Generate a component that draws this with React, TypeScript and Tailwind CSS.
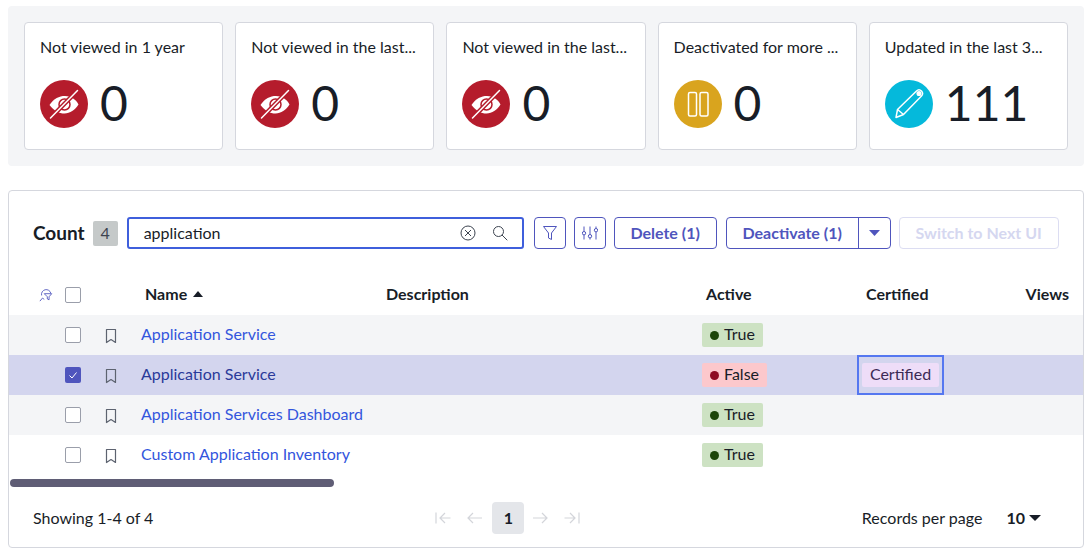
import { ReactNode } from "react";

// ---- icons ----

function EyeOff() {
  return (
    <svg viewBox="0 0 48 48" className="h-12 w-12">
      <path d="M9.500 25C14 18.500 19 16 25 16s10.500 3 13.500 8.500C35 30 30 33.500 24.500 33.500S14 31 9.500 25Z" fill="#fff" />
      <circle cx="24.500" cy="24.500" r="5.500" fill="none" stroke="#b51c2c" strokeWidth="1.500" />
      <path d="M10.500 38 37.500 10.500" stroke="#b51c2c" strokeWidth="4.500" />
      <path d="M10.500 38 37.500 10.500" stroke="#fff" strokeWidth="1.500" strokeLinecap="round" />
    </svg>
  );
}

function Pause() {
  return (
    <svg viewBox="0 0 48 48" className="h-12 w-12" fill="none" stroke="#fff" strokeWidth="1.500">
      <rect x="14.500" y="12.500" width="8" height="23.500" rx="1.500" />
      <rect x="26" y="12.500" width="8" height="23.500" rx="1.500" />
    </svg>
  );
}

function Pencil() {
  return (
    <svg viewBox="0 0 48 48" className="h-12 w-12" fill="none" stroke="#fff" strokeWidth="1.500" strokeLinejoin="round">
      <path d="M11 37.500l1.500-8L31.500 11c1.500-1.500 3.500-1.500 5 0s1.500 3.500 0 5L18.500 34.500 11 37.500Z" />
      <path d="M12.500 29.500l6 5" />
      <circle cx="34" cy="13.500" r="1.800" fill="#fff" />
    </svg>
  );
}

function FilterIcon() {
  return (
    <svg viewBox="0 0 16 16" className="h-4 w-4" fill="none" stroke="#4f55bd" strokeWidth="1" strokeLinejoin="round">
      <path d="M1.500 1.500h13L9.500 8v6.500l-3-1.500V8L1.500 1.500Z" />
    </svg>
  );
}

function SlidersIcon() {
  return (
    <svg viewBox="0 0 16 16" className="h-4 w-4" fill="none" stroke="#4f55bd" strokeWidth="1">
      <path d="M2 1.500v5M2 10v4.500M8 1.500v8M8 13v1.500M14 1.500v2M14 7v7.500" />
      <circle cx="2" cy="8.200" r="1.700" />
      <circle cx="8" cy="11.200" r="1.700" />
      <circle cx="14" cy="5.200" r="1.700" />
    </svg>
  );
}

function ClearIcon() {
  return (
    <svg viewBox="0 0 16 16" className="h-4 w-4" fill="none" stroke="#3d4450" strokeWidth="1">
      <circle cx="8" cy="8" r="7" />
      <path d="M5 5l6 6M11 5l-6 6" />
    </svg>
  );
}

function SearchIcon() {
  return (
    <svg viewBox="0 0 16 16" className="h-4 w-4" fill="none" stroke="#3d4450" strokeWidth="1">
      <circle cx="6.500" cy="6.500" r="5" />
      <path d="M10.200 10.200l4.800 4.800" strokeLinecap="round" />
    </svg>
  );
}

function Bookmark() {
  return (
    <svg viewBox="0 0 14 16" className="h-4 w-[14px]" fill="none" stroke="#5d6370" strokeWidth="1.200" strokeLinejoin="round">
      <path d="M2.500 1.500h9v13L7 11.500l-4.500 3v-13Z" />
    </svg>
  );
}

function PersonalizeIcon() {
  return (
    <svg viewBox="0 0 16 16" className="h-[14px] w-[14px]" fill="none" stroke="#4f55bd" strokeWidth="1">
      <path d="M3 8.500A5.300 5.300 0 1 1 13.500 6" />
      <path d="M6 6.500h8.500L11.500 10v3.500l-2-1V10L6 6.500Z" strokeLinejoin="round" />
      <path d="M1 15l3-3.500 2 1.500" />
    </svg>
  );
}

function Arrow({ dir, bar }: { dir: "left" | "right"; bar?: boolean }) {
  const flip = dir === "right" ? "-scale-x-100" : "";
  return (
    <svg viewBox="0 0 16 16" className={`h-4 w-4 ${flip}`} fill="none" stroke="#d3d5da" strokeWidth="1.200">
      <path d={bar ? "M5 8h10.500M10 3L5 8l5 5" : "M1 8h14M6 3L1 8l5 5"} />
      {bar && <path d="M1 2.500v11" />}
    </svg>
  );
}

function Caret({ up, color = "#181d27", w = "w-[10px]" }: { up?: boolean; color?: string; w?: string }) {
  return (
    <svg viewBox="0 0 10 6" className={`h-[6px] ${w}`} preserveAspectRatio="none">
      <path d={up ? "M5 0l5 6H0Z" : "M0 0h10L5 6Z"} fill={color} />
    </svg>
  );
}

function CheckBox({ checked }: { checked?: boolean }) {
  if (checked) {
    return (
      <span className="flex h-4 w-4 items-center justify-center rounded-[2px] bg-[#4f55bd]">
        <svg viewBox="0 0 12 12" className="h-3 w-3" fill="none" stroke="#fff" strokeWidth="1">
          <path d="M2.500 6.500l2.500 2.500 4.500-5.500" />
        </svg>
      </span>
    );
  }
  return <span className="block h-4 w-4 rounded-[2px] border border-[#9a9eaa] bg-white" />;
}

// ---- data ----

const STATS: { title: string; value: string; bg: string; icon: ReactNode }[] = [
  { title: "Not viewed in 1 year", value: "0", bg: "bg-[#b51c2c]", icon: <EyeOff /> },
  { title: "Not viewed in the last...", value: "0", bg: "bg-[#b51c2c]", icon: <EyeOff /> },
  { title: "Not viewed in the last...", value: "0", bg: "bg-[#b51c2c]", icon: <EyeOff /> },
  { title: "Deactivated for more ...", value: "0", bg: "bg-[#d9a41e]", icon: <Pause /> },
  { title: "Updated in the last 3...", value: "111", bg: "bg-[#05b9db]", icon: <Pencil /> },
];

const ROWS = [
  { name: "Application Service", active: true, bg: "bg-[#f4f5f7]", link: "text-[#3355dd]" },
  { name: "Application Service", active: false, certified: true, checked: true, bg: "bg-[#d3d5ee]", link: "text-[#2a3a9a]" },
  { name: "Application Services Dashboard", active: true, bg: "bg-[#f4f5f7]", link: "text-[#3355dd]" },
  { name: "Custom Application Inventory", active: true, bg: "bg-white", link: "text-[#3355dd]" },
];

const COLS = "grid grid-cols-[48px_40px_35px_245px_316px_164px_87px_139px]";

export default function App() {
  return (
    <div className="h-[555px] w-[1090px] overflow-hidden bg-white pl-2 pr-[6px] pt-[6px] font-['Lato','Noto_Sans',sans-serif] text-[#181d27]">
      {/* stat cards */}
      <div className="grid h-40 grid-cols-5 gap-3 rounded-[4px] bg-[#f4f5f7] px-4 pt-4">
        {STATS.map((s, i) => (
          <div key={i} className="h-32 rounded-[4px] border border-[#d5d7de] bg-white px-[15px] pt-3">
            <p className="whitespace-nowrap text-[16px] leading-6">{s.title}</p>
            <div className="mt-5 flex items-center gap-3">
              <span className={`flex h-12 w-12 items-center justify-center rounded-full ${s.bg}`}>{s.icon}</span>
              <span className="pb-[2px] text-[48px] leading-[48px]">{s.value}</span>
            </div>
          </div>
        ))}
      </div>

      {/* table panel */}
      <div className="mt-6 h-[358px] rounded-[4px] border border-[#d5d7de] bg-white">
        <div className="flex items-center pl-6 pt-[26px]">
          <span className="text-[19px] font-bold leading-8">Count</span>
          <span className="ml-2 flex h-[25px] w-[25px] items-center justify-center rounded-[2px] bg-[#c5c9c9] text-[16px] text-[#3d4450]">4</span>
          <div className="ml-[9px] flex h-8 w-[397px] items-center rounded-[3px] border-2 border-[#3f5fdc] pl-[13px] pr-[14px]">
            <span className="flex-1 pl-[2px] text-[16px]">application</span>
            <ClearIcon />
            <span className="ml-4"><SearchIcon /></span>
          </div>
          <button className="ml-[10px] flex h-8 w-8 items-center justify-center rounded-[4px] border border-[#4f55bd]"><FilterIcon /></button>
          <button className="ml-2 flex h-8 w-8 items-center justify-center rounded-[4px] border border-[#4f55bd]"><SlidersIcon /></button>
          <button className="ml-2 h-8 w-[103px] rounded-[4px] border border-[#4f55bd] text-[16px] font-bold text-[#4f55bd]">Delete (1)</button>
          <div className="ml-[9px] flex h-8 w-[165px] rounded-[4px] border border-[#4f55bd]">
            <button className="w-[132px] border-r border-[#4f55bd] text-[16px] font-bold text-[#4f55bd]">Deactivate (1)</button>
            <button className="flex flex-1 items-center justify-center"><Caret color="#4f55bd" w="w-[11px]" /></button>
          </div>
          <button className="ml-2 h-8 w-40 rounded-[4px] border border-[#dcddf2] text-[16px] font-bold text-[#d5d7f0]">Switch to Next UI</button>
        </div>

        {/* header */}
        <div className={`${COLS} mt-[26px] h-10 items-center text-[16px] font-bold`}>
          <span className="flex justify-center pl-[25px]"><PersonalizeIcon /></span>
          <span className="pl-2"><CheckBox /></span>
          <span />
          <span className="flex items-center gap-[6px] pb-[2px] pl-[13px]">Name <Caret up /></span>
          <span className="pb-[2px] pl-[9px]">Description</span>
          <span className="pb-[2px] pl-[13px]">Active</span>
          <span className="whitespace-nowrap pb-[2px] pl-[9px]">Certified</span>
          <span className="pb-[2px] pr-[14px] text-right">Views</span>
        </div>

        {/* rows */}
        {ROWS.map((r, i) => (
          <div key={i} className={`${COLS} h-10 items-center text-[16px] ${r.bg}`}>
            <span />
            <span className="pl-2"><CheckBox checked={r.checked} /></span>
            <span className="flex justify-center pt-[2px] pr-[8px]"><Bookmark /></span>
            <span className={`pb-[2px] pl-[9px] ${r.link}`}>{r.name}</span>
            <span />
            <span className="flex pl-[9px]">
              <span className={`flex h-6 items-center gap-[5px] rounded-[2px] px-2 ${r.active ? "bg-[#cde2c3]" : "bg-[#fcc8cc]"}`}>
                <span className={`h-[9px] w-[9px] rounded-full ${r.active ? "bg-[#1c4508]" : "bg-[#8e0c22]"}`} />
                <span className="pb-[2px]">{r.active ? "True" : "False"}</span>
              </span>
            </span>
            <span className={`flex h-10 items-center px-[3px] ${r.certified ? "border-2 border-[#5577f0]" : ""}`}>
              {r.certified && (
                <span className="flex h-6 w-[77px] items-center justify-center rounded-[2px] bg-[#eeddf8] text-[#3c2a55]">
                  <span className="pb-[2px]">Certified</span>
                </span>
              )}
            </span>
            <span />
          </div>
        ))}

        {/* scrollbar */}
        <div className="ml-px mt-1 h-2 w-[324px] rounded-full bg-[#5f5d75]" />

        {/* footer */}
        <div className="mt-[15px] flex h-8 items-center pl-6 pr-[42px] text-[16px]">
          <span>Showing 1-4 of 4</span>
          <div className="ml-[282px] flex items-center">
            <Arrow dir="left" bar />
            <span className="ml-4"><Arrow dir="left" /></span>
            <span className="ml-[9px] flex h-8 w-8 items-center justify-center rounded-[4px] bg-[#e4e6ea] font-bold">1</span>
            <span className="ml-2"><Arrow dir="right" /></span>
            <span className="ml-4"><Arrow dir="right" bar /></span>
          </div>
          <span className="ml-auto">Records per page</span>
          <span className="ml-6 font-bold">10</span>
          <span className="ml-1"><Caret w="w-3" /></span>
        </div>
      </div>
    </div>
  );
}
